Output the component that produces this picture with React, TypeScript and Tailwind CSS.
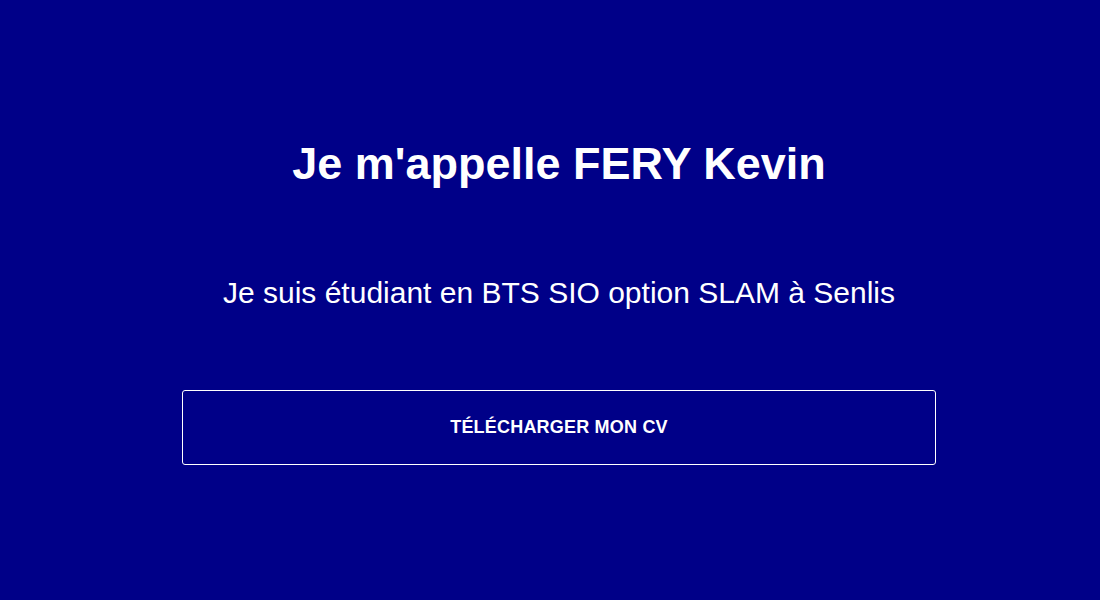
export default function App() {
  return (
    <div className="flex h-[600px] w-[1100px] flex-col items-center bg-[#000088] pl-[18px] font-['Liberation_Sans',Arial,sans-serif] text-white">
      <h1 className="mt-[138px] text-[45px] font-bold leading-[52px]">Je m'appelle FERY Kevin</h1>
      <p className="mt-[85px] text-[30px] leading-[36px]">Je suis étudiant en BTS SIO option SLAM à Senlis</p>
      <a
        href="#"
        className="mt-[79px] flex h-[75px] w-[754px] items-center justify-center rounded-[3px] border border-white text-[18px] font-bold uppercase tracking-[0.2px]"
      >
        Télécharger mon CV
      </a>
    </div>
  )
}
